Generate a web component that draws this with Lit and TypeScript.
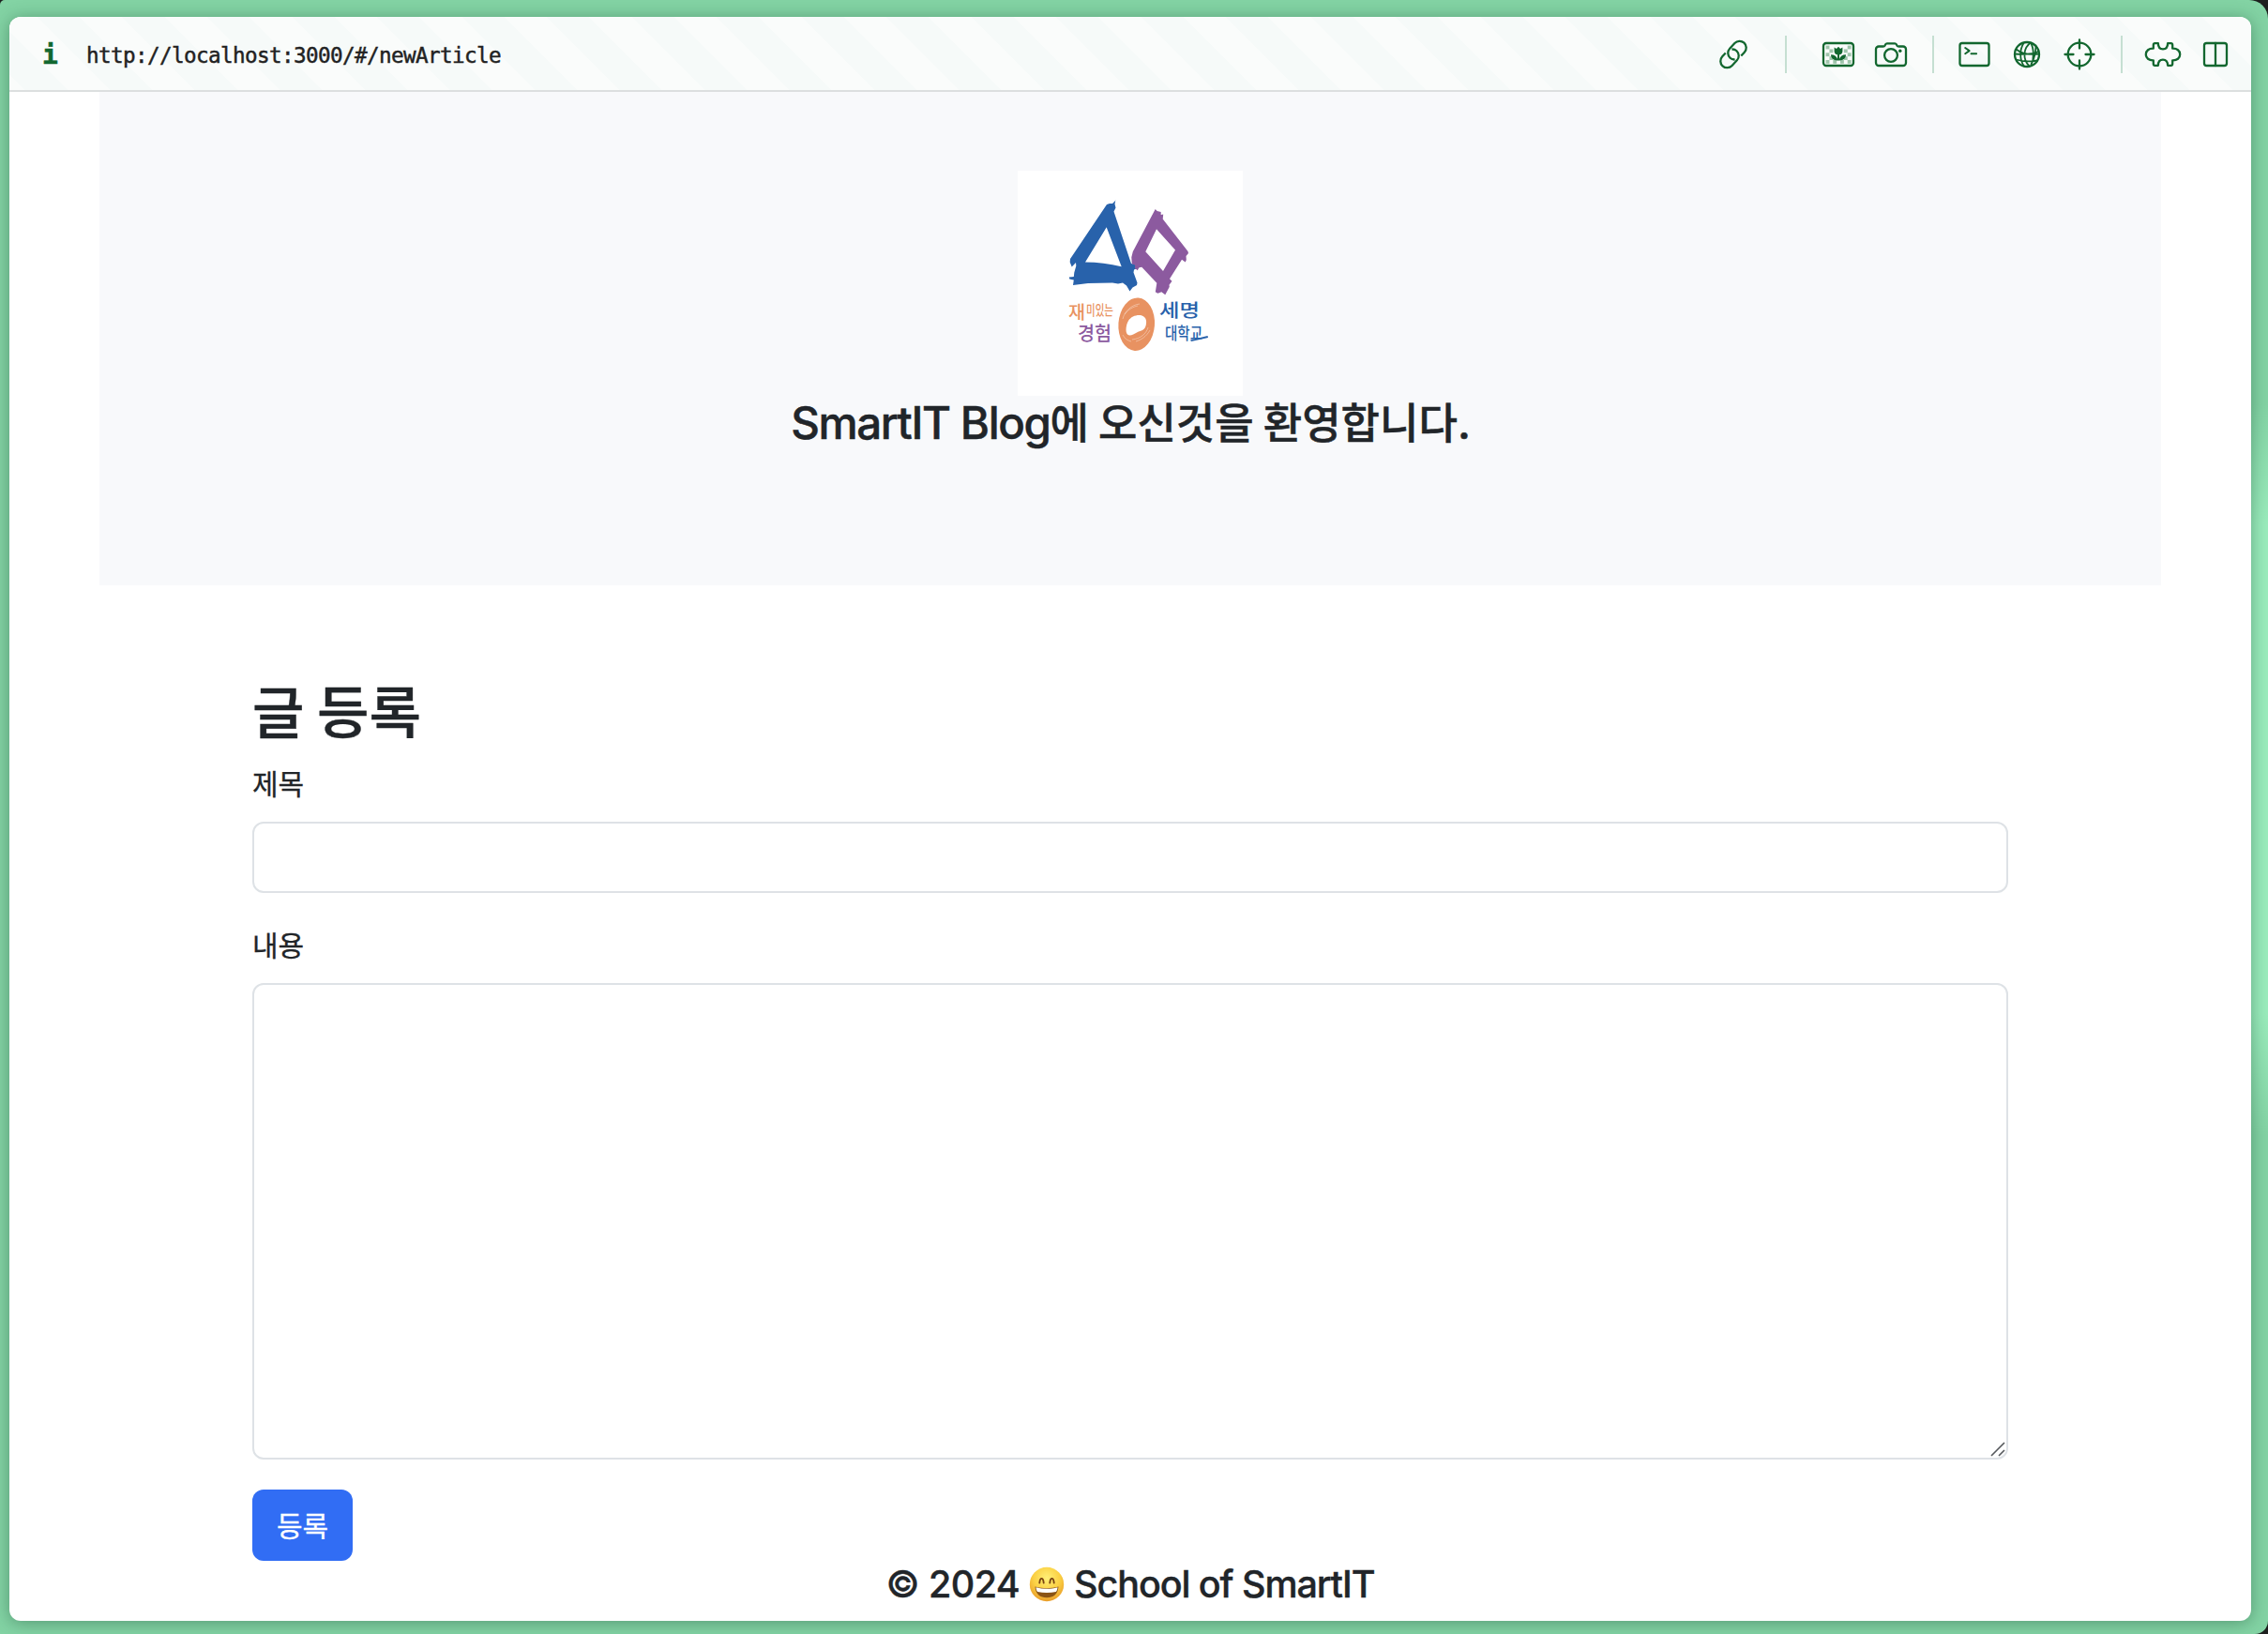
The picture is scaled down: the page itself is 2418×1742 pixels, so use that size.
import { LitElement, html, css, svg } from "lit";
import { customElement } from "lit/decorators.js";

@customElement("tool-icon")
class ToolIcon extends LitElement {
  static properties = { name: { type: String } };
  declare name: string;
  static styles = css`
    :host { display: block; width: 40px; height: 40px; }
    svg { display: block; width: 40px; height: 40px; fill: none; stroke: #12672f; stroke-width: 2.3; stroke-linecap: round; stroke-linejoin: round; }
    .solid { fill: #12672f; stroke: none; }
    .check { fill: #9fc5ab; stroke: none; }
    .fine { stroke-width: 1.8; }
  `;
  // Every glyph is drawn in a 40 x 40 box centred on 20,20.
  private shapes() {
    switch (this.name) {
      case "link":
        return svg`<g transform="rotate(-47 20 20)" stroke-linecap="butt">
          <path d="M15.500 12.900H10.300a7.100 7.100 0 0 0 0 14.200H18a7.100 7.100 0 0 0 7.100-7.100c0-2-.9-3.700-2.200-4.900"/>
          <path d="M24.500 27.100H29.700a7.100 7.100 0 0 0 0-14.200H22a7.100 7.100 0 0 0-7.100 7.100c0 2 .9 3.700 2.200 4.900"/></g>`;
      case "picture": {
        const cells = [];
        for (let r = 0; r < 5; r++)
          for (let c = 0; c < 7; c++)
            if ((r + c) % 2 === 0 && (c < 2 || c > 4 || r === 4))
              cells.push(svg`<rect class="check" x=${6.6 + c * 3.85} y=${10.6 + r * 3.85} width="3.85" height="3.85"/>`);
        return svg`${cells}<rect x="4" y="8" width="32" height="24" rx="3"/>
          <path class="solid" d="M15.6 12.5l2.3 1.400 2.100-2.200 2.100 2.200 2.300-1.400v4.200c0 2-1.400 3.300-3.400 3.500v4.600c1-2.600 3.500-4.600 7-4.500 0 3.800-2.700 6.100-7 6.100h-2c-4.300 0-7-2.300-7-6.100 3.500-.1 6 1.900 7 4.500v-4.600c-2-.2-3.400-1.500-3.400-3.500z"/>`;
      }
      case "camera":
        return svg`<path d="M7 11.500h4.600c1 0 1.600-.3 2-1.100.5-1.300 1-2.100 2.200-2.100h8.400c1.200 0 1.700.8 2.200 2.100.4.800 1 1.100 2 1.100H33a3 3 0 0 1 3 3v14.500a3 3 0 0 1-3 3H7a3 3 0 0 1-3-3V14.500a3 3 0 0 1 3-3z"/>
          <circle cx="20" cy="21" r="6.900"/><circle class="solid" cx="29.800" cy="16.200" r="1.700"/>`;
      case "terminal":
        return svg`<rect x="4.500" y="8" width="31" height="24" rx="2.500"/><path d="M10.200 13l4.400 3.100-4.400 3.100M16.500 19.300h5.600" stroke-width="2"/>`;
      case "globe":
        return svg`<circle cx="20" cy="20" r="13"/>
          <path class="fine" d="M16.500 8C12 15 12 26 17 32.500M24 7.500C16 13 15 25 22.500 32.500M24 7.500c3.500 6 3.800 17 .5 24.500M29.500 10.500c0 6-1 13-5 20M8.500 14.500c6 5 16 6 24 5M7 19.500c7.500.5 18 1 25-2.500M8.500 25.500c7 2 15 2.500 22.500 1"/>`;
      case "target":
        return svg`<circle cx="20" cy="20" r="12.300"/><path d="M20 4.500v9M20 26.500v9M4.500 20h9M26.500 20h9"/>`;
      case "puzzle":
        return svg`<path d="M9.800 12.700V10c0-1.100.7-1.800 1.700-1.800h3.400c0 3.900 1.800 6.100 5.100 6.100s5.100-2.200 5.100-6.100h3.400c1 0 1.700.7 1.700 1.800v3.700c4.700-.2 8 2.200 8 6.300s-3.300 6.500-8 6.300V30c0 1.100-.7 1.800-1.700 1.800h-3.400c0-3.900-1.800-6.100-5.100-6.100s-5.100 2.200-5.100 6.100h-3.400c-1 0-1.700-.7-1.700-1.800v-3.700c-4.700.2-8-2.200-8-6.300s3.300-6.500 8-6.300z"/>`;
      default:
        return svg`<rect x="8" y="8" width="24" height="24" rx="2.500"/><path d="M20 8v24"/>`;
    }
  }
  render() {
    return html`<svg viewBox="0 0 40 40">${this.shapes()}</svg>`;
  }
}

@customElement("school-logo")
class SchoolLogo extends LitElement {
  static styles = css`
    :host { display: block; width: 240px; height: 240px; background: #fff; }
    svg { display: block; width: 240px; height: 240px; }
    text { font-family: "Noto Sans CJK KR", sans-serif; font-weight: 500; }
    .blue { fill: #2862ab; }
    .violet { fill: #8c5a9f; }
    .orange { fill: #e89261; }
    .scratch { fill: none; stroke: #fff; stroke-width: .7; opacity: .5; }
  `;
  render() {
    return html`<svg viewBox="0 0 240 240">
      <path class="blue" fill-rule="evenodd" d="M104 32l-3 3-3 0-3 1-39 58-.3 3.500 2 5 4.300-4.500.3 3.500-2 7-.5 4.500-5 .5.500 2 4.500 1-.8 5.500 16-2 26-.5 6 1 5-1 4 3 3.500 6 3-4 4.500-2.500.5-2.500-4-11 .5-3 6-2.500-6-3.500-3-.5-18.500-55.500 2-4-1-4 1-5zM94.700 60.300L72 97.500c13 .2 26 1.500 38.700 4.800z"/>
      <path class="violet" fill-rule="evenodd" d="M146.700 41l2 2 4 1 0 3 2.500-.5-.5 5 26.800 34.500.5 2-2.500 3 .3 4-1 2.500-3.800-2.800-13 20.500 2.500 2.500-3 4 .3 2-4.500 8.500-4-3-4 1.500-2.500-1.500.5-3 1-6.500-16-17-3 .5-1.500 3-3-2.500.5-3-3.500-1.500-.5-7 1.500-6zM148 62.300l-11.700 24 18.700 20.700 13-22.500z"/>
      <ellipse class="orange" cx="126.700" cy="163.700" rx="19.300" ry="28.300" transform="rotate(4 126.700 163.700)"/>
      <path fill="#fff" d="M118 160c3-5 10-7 14.500-5.500s5.500 6 4 11-6 5-9.500 7-7.500 4.500-10 2-1.500-10.500 1-14.500z"/>
      <path class="scratch" d="M112 158c2-8 9-15 18-16M114 153c4-5 9-8 14-9M139 167c-2 7-8 12-17 13M141 170c-4 7-9 10-15 12M112 175c2 4 5 6 9 7"/>
      <text class="orange" x="54" y="158" font-size="19" textLength="18" lengthAdjust="spacingAndGlyphs">재</text>
      <text class="orange" x="73" y="154" font-size="15" textLength="29" lengthAdjust="spacingAndGlyphs">미있는</text>
      <text class="violet" x="64" y="181" font-size="20" textLength="36" lengthAdjust="spacingAndGlyphs">경험</text>
      <text class="blue" x="151" y="156" font-size="19" textLength="43" lengthAdjust="spacingAndGlyphs">세명</text>
      <text class="blue" x="157" y="180" font-size="18" textLength="40" lengthAdjust="spacingAndGlyphs">대학교</text>
      <path class="blue" d="M184 180.500l18.500-4.500.5 2-18 4z"/>
    </svg>`;
  }
}

@customElement("grin-face")
class GrinFace extends LitElement {
  static styles = css`
    :host { display: block; width: 38px; height: 38px; }
    svg { display: block; width: 38px; height: 38px; }
  `;
  render() {
    return html`<svg viewBox="0 0 38 38">
      <defs><radialGradient id="face" cx=".5" cy=".32" r=".7">
        <stop offset="0" stop-color="#fff078"/><stop offset=".55" stop-color="#fbd043"/><stop offset="1" stop-color="#e89a28"/>
      </radialGradient></defs>
      <circle cx="19" cy="19" r="18.200" fill="url(#face)"/>
      <path d="M11.300 17.500c.3-3 1-4.600 2.200-4.600s1.900 1.600 2.200 4.600M22.300 17.500c.3-3 1-4.600 2.200-4.600s1.900 1.600 2.200 4.600" fill="none" stroke="#7b4512" stroke-width="1.900" stroke-linecap="round"/>
      <path d="M6.500 21.500c8 2.300 17 2.300 25 0-.6 8-5.500 11.800-12.500 11.800S7.100 29.500 6.500 21.500z" fill="#8a5315"/>
      <path d="M7.500 22.300c7.500 2 15.500 2 23 0-.2 2.600-.8 3.900-1.700 4.700-6 1.300-13.600 1.300-19.600 0-.9-.8-1.500-2.100-1.700-4.700z" fill="#fff"/>
    </svg>`;
  }
}

@customElement("app-root")
class AppRoot extends LitElement {
  static styles = css`
    :host { display: block; width: 2418px; height: 1742px; background: #1d1f1e; overflow: hidden; color: #212529; font-family: Inter, "Noto Sans CJK KR", sans-serif; }
    * { box-sizing: border-box; }
    .desk { height: 1742px; padding: 18px 18px 14px 10px; border-radius: 5px 20px 14px 0; overflow: hidden;
      background: linear-gradient(90deg, #83d3a4 2360px, transparent 2360px), linear-gradient(#83d3a4 430px, #9aecbc 560px, #9aecbc 1080px, #83d3a4 1210px); }
    .window { display: flex; flex-direction: column; height: 1710px; border-radius: 12px; background: #fff; overflow: hidden; box-shadow: 0 2px 18px rgba(20, 70, 45, .42); }
    .bar { display: flex; align-items: center; height: 80px; padding: 2px 18px 0 35px; border-bottom: 2px solid #dcdfdf;
      background: repeating-linear-gradient(45deg, #fafcfb 0 12px, #f6faf9 12px 44px, #fafcfb 44px 64px); }
    .info { width: 47px; padding-top: 1px; font: 700 28px "DejaVu Sans Mono", monospace; color: #12672f; -webkit-text-stroke: .5px #12672f; }
    .url { flex: 1; padding-top: 2px; font: 22.600px "DejaVu Sans Mono", monospace; letter-spacing: -.6px; color: #222; -webkit-text-stroke: .45px #222; }
    .tools { display: flex; align-items: center; }
    .pair { display: flex; gap: 16px; }
    .rule { width: 2px; height: 40px; background: #c5dfd2; }
    .link { margin-right: 35px; }
    .media { margin: 0 24px 0 35px; }
    .dev { margin: 0 24px 0 23px; }
    .view { margin-left: 23px; }
    .hero { display: flex; flex-direction: column; align-items: center; width: 2198px; height: 526px; margin: 0 auto; padding-top: 84px; background: #f8f9fb; }
    .ko { font-family: "Noto Sans CJK KR", sans-serif; }
    .welcome { margin: 0; font-size: 47.500px; line-height: 54px; font-weight: 550; letter-spacing: -1.400px; white-space: nowrap; -webkit-text-stroke: .5px #212529; }
    .welcome .ko { font-size: 45px; font-weight: 500; letter-spacing: 0; }
    .form { display: flex; flex-direction: column; align-items: flex-start; width: 1872px; margin: 95px auto 0; }
    .title { margin: 0; height: 77px; line-height: 73px; font-size: 60.300px; font-weight: 500; font-family: "Noto Sans CJK KR", sans-serif; -webkit-text-stroke: .4px #212529; }
    .label { height: 48px; line-height: 45px; font-size: 30px; font-family: "Noto Sans CJK KR", sans-serif; margin: 16px 0; -webkit-text-stroke: .3px #212529; }
    .second { margin-top: 32px; }
    .field { display: block; width: 1872px; margin: 0; border: 2px solid #dee2e6; border-radius: 12px; background: #fff; outline: none; }
    .line { height: 76px; }
    .area-box { position: relative; }
    .area { height: 508px; resize: none; }
    .grip { position: absolute; right: 3px; bottom: 3px; width: 16px; height: 16px; stroke: #55585c; stroke-width: 1.600; }
    .submit { margin: 32px 0 0; width: 107px; height: 76px; padding: 0 0 3px; border: 0; border-radius: 12px; background: #316df4; color: #fff; font: 30px "Noto Sans CJK KR", sans-serif; -webkit-text-stroke: .3px #fff; }
    .foot { display: flex; align-items: center; justify-content: center; gap: 10px; margin-top: 1px; height: 48px; font-size: 39.500px; font-weight: 550; letter-spacing: -1.080px; white-space: nowrap; -webkit-text-stroke: .4px #212529; }
    .year { letter-spacing: -.6px; }
  `;
  render() {
    return html`<div class="desk"><div class="window">
      <div class="bar">
        <span class="info">i</span>
        <span class="url">http://localhost:3000/#/newArticle</span>
        <div class="tools">
          <tool-icon class="link" name="link"></tool-icon>
          <div class="rule"></div>
          <div class="pair media"><tool-icon name="picture"></tool-icon><tool-icon name="camera"></tool-icon></div>
          <div class="rule"></div>
          <div class="pair dev"><tool-icon name="terminal"></tool-icon><tool-icon name="globe"></tool-icon><tool-icon name="target"></tool-icon></div>
          <div class="rule"></div>
          <div class="pair view"><tool-icon name="puzzle"></tool-icon><tool-icon name="columns"></tool-icon></div>
        </div>
      </div>
      <div class="hero">
        <school-logo></school-logo>
        <h3 class="welcome">SmartIT Blog<span class="ko">에 오신것을 환영합니다</span>.</h3>
      </div>
      <div class="form">
        <h2 class="title">글 등록</h2>
        <label class="label">제목</label>
        <input class="field line" />
        <label class="label second">내용</label>
        <div class="area-box">
          <textarea class="field area"></textarea>
          <svg class="grip" viewBox="0 0 16 16"><path d="M1 15L15 1M9 15l6-6"/></svg>
        </div>
        <button class="submit">등록</button>
      </div>
      <div class="foot"><span class="year">© 2024</span><grin-face></grin-face><span>School of SmartIT</span></div>
    </div></div>`;
  }
}
